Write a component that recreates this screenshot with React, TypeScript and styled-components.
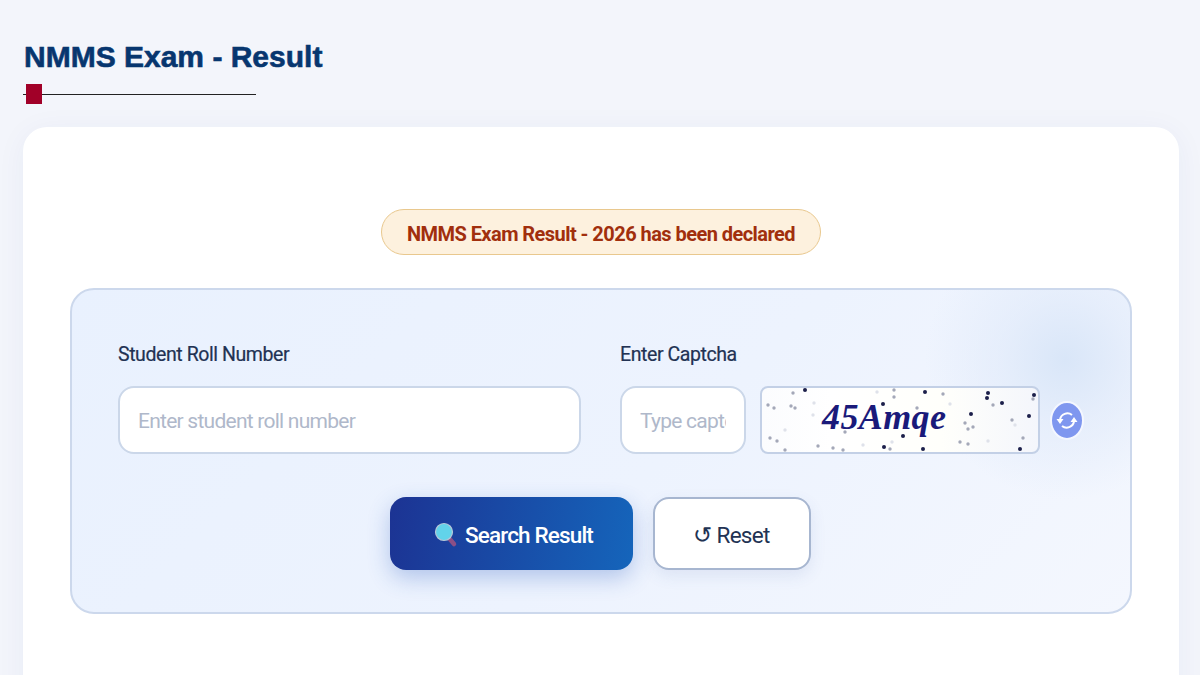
import styled, { createGlobalStyle } from "styled-components";

const GlobalStyle = createGlobalStyle`
  html, body {
    margin: 0;
    height: 675px;
    overflow: hidden;
    background: #f3f5fb;
  }
  * {
    box-sizing: border-box;
  }
`

const Page = styled.main`
  padding: 38px 21px 0 23px;
  font-family: Roboto, "Noto Sans", sans-serif;
`

const Title = styled.h1`
  margin: 0 0 0 1px;
  font-family: "Liberation Sans", Arial, sans-serif;
  font-size: 30px;
  line-height: 38px;
  font-weight: 700;
  color: #07366f;
  -webkit-text-stroke: 0.6px #07366f;
`

const Rule = styled.div`
  display: flex;
  align-items: center;
  width: 233px;
  height: 20px;
  margin-top: 8px;
  background: linear-gradient(#222, #222) left center / 100% 1px no-repeat;
`

const RuleMark = styled.span`
  width: 16px;
  height: 20px;
  margin-left: 3px;
  background: #a10028;
`

const Card = styled.section`
  margin-top: 23px;
  height: 640px;
  padding: 82px 47px 0;
  background: #fff;
  border-radius: 24px 24px 0 0;
  box-shadow: 0 4px 30px rgba(30, 60, 130, 0.05);
`

const Notice = styled.div`
  width: 440px;
  height: 46px;
  margin: 0 auto 33px;
  padding-top: 4px;
  display: flex;
  align-items: center;
  justify-content: center;
  background: #fdf1de;
  border: 1px solid #e9c88e;
  border-radius: 23px;
  color: #a12f0d;
  font-size: 20px;
  font-weight: 700;
  letter-spacing: -0.55px;
`

const Panel = styled.div`
  height: 326px;
  padding: 49px 46px 0;
  border: 2px solid #ccd8ec;
  border-radius: 24px;
  background:
    radial-gradient(circle 140px at 993px 70px, #d9e6f8 0%, rgba(224, 234, 250, 0.65) 45%, rgba(233, 240, 253, 0) 100%),
    linear-gradient(135deg, #e9f1fe 0%, #edf3fe 55%, #f4f7fe 100%);
`

const FieldRow = styled.div`
  display: flex;
  gap: 39px;
`

const Field = styled.div<{ $width: number }>`
  display: flex;
  flex-direction: column;
  gap: 16px;
  width: ${(p) => p.$width}px;
`

const Label = styled.label`
  height: 31px;
  line-height: 31px;
  font-size: 19.5px;
  font-weight: 400;
  letter-spacing: -0.42px;
  -webkit-text-stroke: 0.2px #223253;
  color: #223253;
`

const Input = styled.input`
  width: 100%;
  height: 68px;
  padding: 2px 18px 0 18px;
  border: 2px solid #cbd7e9;
  border-radius: 16px;
  background: #fff;
  outline: none;
  font-family: inherit;
  font-size: 21px;
  letter-spacing: -0.75px;
  color: #223253;

  &::placeholder {
    color: #afb8ca;
    opacity: 1;
  }
`

const CaptchaRow = styled.div`
  display: flex;
  align-items: center;
  gap: 14px;
`

const CaptchaInput = styled(Input)`
  width: 126px;
  flex: none;
`

const CaptchaImage = styled.div`
  position: relative;
  width: 280px;
  height: 68px;
  flex: none;
  overflow: hidden;
  border: 2px solid #c3d0e6;
  border-radius: 8px;
  background: linear-gradient(90deg, #fbfcfe 0%, #ffffff 25%, #fffffb 65%, #f4f6fc 100%);
`

const CaptchaNoise = styled.svg`
  display: block;
  width: 100%;
  height: 100%;
  filter: blur(0.5px);
`

const CaptchaText = styled.span`
  position: absolute;
  left: 60px;
  top: 5px;
  font-family: "Liberation Serif", "Times New Roman", serif;
  font-size: 36px;
  line-height: 48px;
  font-weight: 700;
  font-style: italic;
  letter-spacing: 0.4px;
  color: #1a1a7a;
`

const RefreshButton = styled.button`
  width: 34px;
  height: 39px;
  margin-left: -4px;
  flex: none;
  display: flex;
  align-items: center;
  justify-content: center;
  padding: 0;
  border: 2px solid #f4f7ff;
  border-radius: 50%;
  background: #7f97ef;
`

const Actions = styled.div`
  display: flex;
  justify-content: center;
  gap: 20px;
  margin-top: 43px;
  padding-right: 2px;
`

const SearchButton = styled.button`
  width: 243px;
  height: 73px;
  display: flex;
  align-items: center;
  justify-content: center;
  gap: 7px;
  padding: 2px 0 0 5px;
  border: none;
  border-radius: 16px;
  background: linear-gradient(100deg, #1c3393 0%, #1565bb 100%);
  box-shadow: 0 8px 22px rgba(40, 90, 190, 0.3);
  color: #fff;
  font-family: inherit;
  font-size: 22.5px;
  font-weight: 500;
  letter-spacing: -0.85px;
`

const ResetButton = styled.button`
  width: 158px;
  height: 73px;
  padding: 2px 0 0;
  border: 2px solid #a7b6d0;
  border-radius: 16px;
  background: #fff;
  box-shadow: 0 6px 16px rgba(60, 90, 160, 0.1);
  color: #223253;
  font-family: inherit;
  font-size: 22.5px;
  font-weight: 400;
  letter-spacing: -0.7px;
`

// x, y, tone (0 faint, 1 grey, 2 dark)
const noise = [
  [43, 2, 2], [31, 5, 1], [6, 17, 1], [12, 20, 1], [29, 18, 1], [33, 20, 1], [52, 15, 0], [51, 27, 0],
  [115, 4, 0], [132, 2, 1], [132, 9, 1], [163, 4, 2], [181, 6, 1], [226, 5, 2], [225, 10, 2], [231, 17, 1],
  [240, 15, 2], [272, 7, 2], [271, 11, 1], [188, 16, 0], [209, 26, 2], [267, 28, 2], [250, 32, 1], [203, 35, 1],
  [211, 39, 1], [206, 41, 1], [253, 37, 0], [8, 50, 1], [15, 53, 1], [23, 42, 0], [23, 62, 1], [56, 58, 1],
  [71, 60, 1], [81, 62, 1], [101, 57, 0], [122, 59, 2], [128, 61, 1], [161, 61, 2], [141, 48, 2], [130, 54, 0],
  [198, 54, 1], [206, 56, 1], [226, 53, 0], [261, 50, 1], [258, 61, 2], [83, 44, 1], [121, 16, 2], [155, 20, 1],
];

const toneColor = ["#dfe2ea", "#a4a8b8", "#1c1f4a"];

function App() {
  return (
    <Page>
      <GlobalStyle />
      <Title>NMMS Exam - Result</Title>
      <Rule>
        <RuleMark />
      </Rule>
      <Card>
        <Notice>NMMS Exam Result - 2026 has been declared</Notice>
        <Panel>
          <FieldRow>
            <Field $width={463}>
              <Label>Student Roll Number</Label>
              <Input placeholder="Enter student roll number" />
            </Field>
            <Field $width={463}>
              <Label>Enter Captcha</Label>
              <CaptchaRow>
                <CaptchaInput placeholder="Type captcha" />
                <CaptchaImage>
                  <CaptchaNoise viewBox="0 0 276 64">
                    {noise.map(([x, y, tone], i) => (
                      <circle key={i} cx={x} cy={y} r={tone === 2 ? 2 : 1.7} fill={toneColor[tone]} />
                    ))}
                  </CaptchaNoise>
                  <CaptchaText>45Amqe</CaptchaText>
                </CaptchaImage>
                <RefreshButton aria-label="Refresh captcha">
                  <svg width="24" height="27" viewBox="0 0 24 24" fill="none">
                    <path d="M17 6.5A7.5 7.5 0 0 0 5 11" stroke="#fff" strokeWidth="2" />
                    <path d="M7 17.5A7.5 7.5 0 0 0 19 13" stroke="#fff" strokeWidth="2" />
                    <path d="M1.5 10.5h7L5 15.5zM15.5 13.5h7L19 8.5z" fill="#fff" />
                  </svg>
                </RefreshButton>
              </CaptchaRow>
            </Field>
          </FieldRow>
          <Actions>
            <SearchButton>
              <svg width="24" height="26" viewBox="0 0 24 26">
                <path d="M14 15l6 7" stroke="#8a4f86" strokeWidth="4.5" strokeLinecap="round" />
                <circle cx="10" cy="10" r="8.5" fill="#62d3ea" stroke="#b5c7d8" strokeWidth="1.2" />
              </svg>
              Search Result
            </SearchButton>
            <ResetButton>↺ Reset</ResetButton>
          </Actions>
        </Panel>
      </Card>
    </Page>
  );
}

export default App;
